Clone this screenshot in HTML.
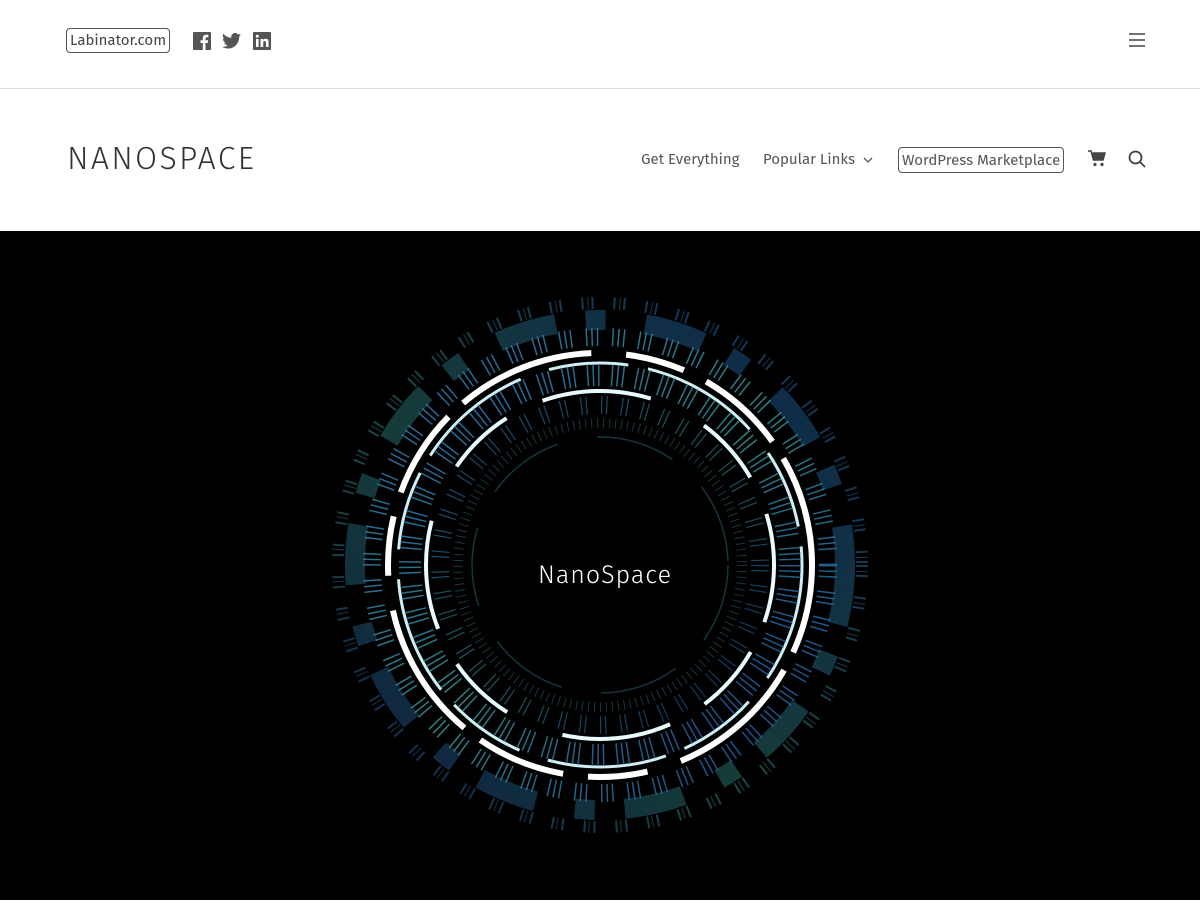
<!DOCTYPE html>
<html><head><meta charset="utf-8"><style>
*{margin:0;padding:0;box-sizing:border-box}
body{width:1200px;height:900px;overflow:hidden;background:#fff;font-family:"Fira Sans","Liberation Sans",sans-serif;color:#444}
.top{height:89px;border-bottom:1px solid #ddd;position:relative}
.lab{position:absolute;left:66px;top:28px;height:25px;border:1px solid #555;border-radius:4px;padding:0 3px;font-size:15px;line-height:23px;color:#444}
.soc{position:absolute;top:32px}
.logo{position:absolute;left:67px;top:140px;font-size:32px;letter-spacing:2.3px;color:#333;font-weight:300}
.nav{position:absolute;top:150px;font-size:15px;color:#555}
.hero{position:absolute;top:231px;left:0;width:1200px;height:669px;background:#000}
</style></head><body>
<div class="top">
<div class="lab">Labinator.com</div>
<svg class="soc" style="left:193px" width="18" height="18" viewBox="0 0 18 18"><rect width="18" height="18" rx="1" fill="#555"/><path d="M12.5 18V11h2.3l.4-2.7h-2.7V6.6c0-.8.3-1.3 1.4-1.3h1.4V2.9c-.3 0-1.1-.1-2.1-.1-2 0-3.4 1.2-3.4 3.5v2H7.5V11h2.3v7z" fill="#fff"/></svg>
<svg class="soc" style="left:222px;top:33px" width="19" height="16" viewBox="0 0 24 20"><path d="M24 2.4a10 10 0 0 1-2.8.8A5 5 0 0 0 23.3.4a9.8 9.8 0 0 1-3.1 1.2A4.9 4.9 0 0 0 11.8 6 14 14 0 0 1 1.7.9a4.9 4.9 0 0 0 1.5 6.6A4.9 4.9 0 0 1 1 6.9v.1a4.9 4.9 0 0 0 3.9 4.8 4.9 4.9 0 0 1-2.2.1 4.9 4.9 0 0 0 4.6 3.4A9.9 9.9 0 0 1 0 17.3 14 14 0 0 0 7.5 19.5c9.1 0 14-7.5 14-14v-.6A10 10 0 0 0 24 2.4z" fill="#555"/></svg>
<svg class="soc" style="left:253px" width="18" height="18" viewBox="0 0 18 18"><rect width="18" height="18" rx="1" fill="#555"/><rect x="3" y="7" width="2.6" height="8" fill="#fff"/><circle cx="4.3" cy="4.3" r="1.5" fill="#fff"/><path d="M7.5 7h2.5v1.1c.4-.7 1.3-1.3 2.6-1.3 2.6 0 3 1.7 3 3.9V15H13v-3.8c0-.9 0-2.1-1.3-2.1s-1.5 1-1.5 2V15H7.5z" fill="#fff"/></svg>
<svg style="position:absolute;left:1129px;top:33px" width="16" height="14"><path d="M0 1h16M0 7h16M0 13h16" stroke="#444" stroke-width="1.6"/></svg>
</div>
<div class="logo">NANOSPACE</div>
<div class="nav" style="left:641px">Get Everything</div>
<div class="nav" style="left:763px">Popular Links</div>
<svg style="position:absolute;left:863px;top:157px" width="10" height="6"><path d="M1 1l4 4 4-4" stroke="#555" fill="none" stroke-width="1.3"/></svg>
<div class="nav" style="left:898px;top:147px;border:1px solid #555;border-radius:4px;padding:0 3px;height:26px;line-height:24px">WordPress Marketplace</div>
<svg style="position:absolute;left:1088px;top:150px" width="18" height="17" viewBox="0 0 18 17"><path d="M0 1h3l2.5 9h9.5l2-7H4.5" fill="#444" stroke="#444" stroke-width="1.5"/><circle cx="7" cy="14.5" r="1.6" fill="#444"/><circle cx="14" cy="14.5" r="1.6" fill="#444"/></svg>
<svg style="position:absolute;left:1128px;top:150px" width="18" height="18"><circle cx="7.5" cy="7.5" r="6" stroke="#444" stroke-width="1.8" fill="none"/><path d="M12 12l5 5" stroke="#444" stroke-width="1.8"/></svg>
<div class="hero">
<svg width="1200" height="669" viewBox="0 231 1200 669">
<defs>
<linearGradient id="g" x1="0" y1="0" x2="1" y2="1"><stop offset="0" stop-color="#2a78c8"/><stop offset=".5" stop-color="#3aa0a0"/><stop offset="1" stop-color="#1a50b0"/></linearGradient>
<linearGradient id="g2" x1="1" y1="0" x2="0" y2="1"><stop offset="0" stop-color="#1d4f9a"/><stop offset=".6" stop-color="#2a7a70"/><stop offset="1" stop-color="#1a3a8a"/></linearGradient>
</defs>
<g fill="none" transform="translate(600 565)">
<circle r="262" stroke="url(#g2)" stroke-width="12" stroke-dasharray="2 4 1 3 2 20" opacity=".6"/>
<circle r="245" stroke="url(#g2)" stroke-width="20" stroke-dasharray="60 30 20 40" opacity=".5"/>
<circle r="228" stroke="url(#g)" stroke-width="18" stroke-dasharray="1.5 4 1.5 4 1.5 14" opacity=".8"/>
<circle r="212" stroke="#fff" stroke-width="6" stroke-dasharray="90 20 140 35 60 25"/>
<circle r="202" stroke="#cfeff5" stroke-width="3" stroke-dasharray="120 30 80 20"/>
<circle r="190" stroke="url(#g)" stroke-width="22" stroke-dasharray="1.5 4 1.5 4 1.5 12" opacity=".8"/>
<circle r="174" stroke="#e8fbff" stroke-width="4" stroke-dasharray="70 40 110 60" transform="rotate(30)"/>
<circle r="160" stroke="url(#g)" stroke-width="18" stroke-dasharray="1.2 4 1.2 14" opacity=".55"/>
<circle r="142" stroke="#3a8a9a" stroke-width="10" stroke-dasharray="1 5" opacity=".4"/>
<circle r="128" stroke="#2a6a7a" stroke-width="1.5" stroke-dasharray="80 40" opacity=".5"/>
</g>
<text x="605" y="583" fill="#fff" font-size="25" text-anchor="middle" font-family="Fira Sans,Liberation Sans,sans-serif" font-weight="300" letter-spacing="1">NanoSpace</text>
</svg>
</div>
</body></html>
